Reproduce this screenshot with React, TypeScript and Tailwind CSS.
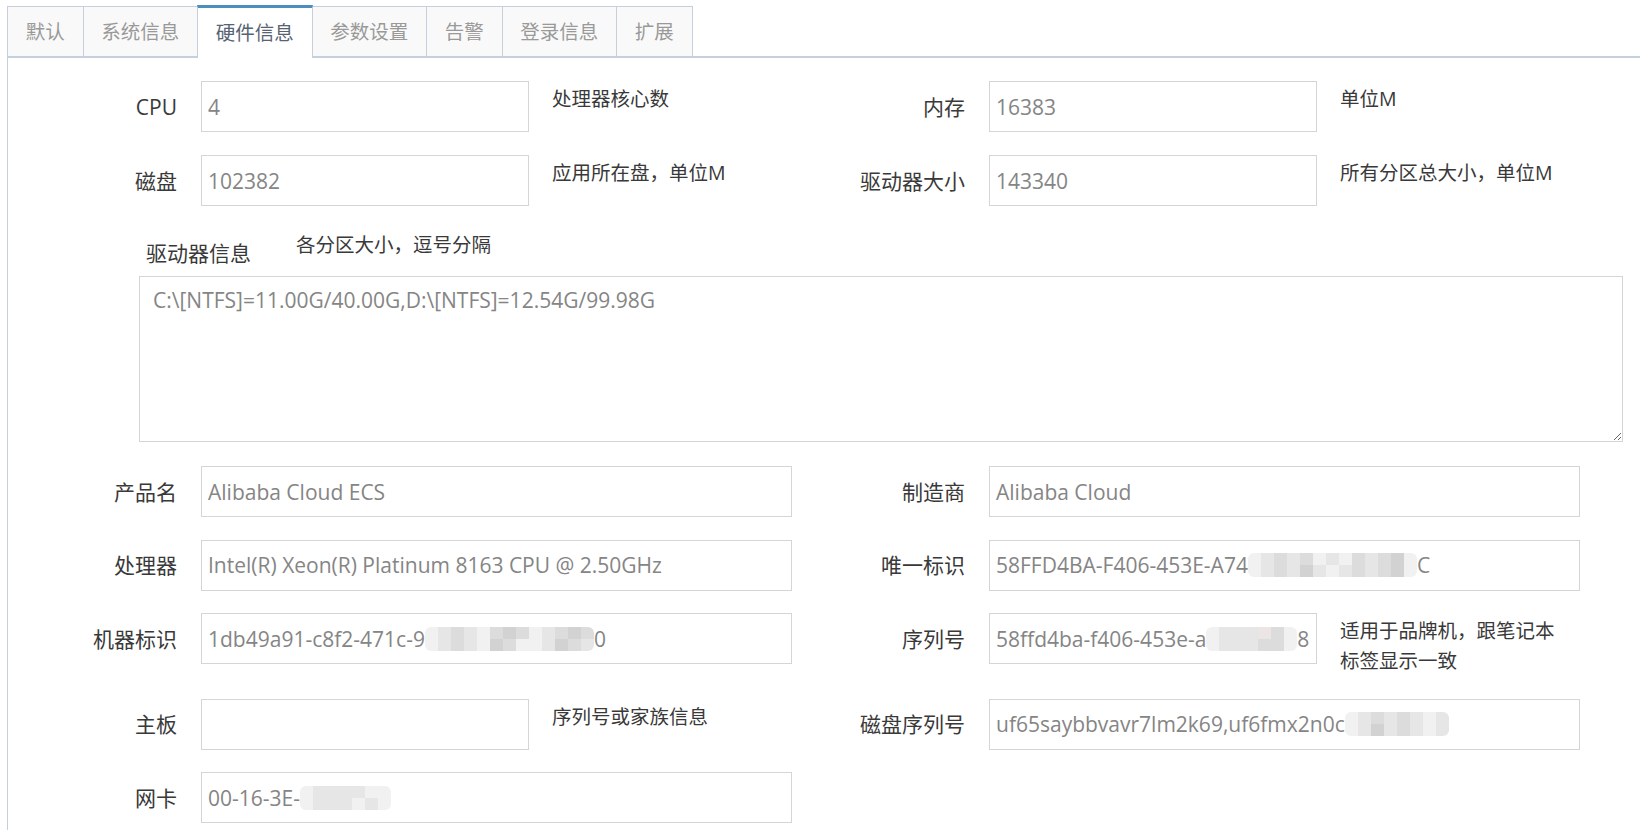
import React from "react";

const tabs = ["默认", "系统信息", "硬件信息", "参数设置", "告警", "登录信息", "扩展"];

const shades: Record<string, string> = {
  a: "bg-[#f1f1f1]",
  b: "bg-[#e6e6e6]",
  c: "bg-[#dcdcdc]",
  d: "bg-[#d2d2d2]",
  e: "bg-[#ebe6e3]",
};

function Mosaic({ top, bottom }: { top: string; bottom: string }) {
  return (
    <span className="inline-flex h-[24px] flex-col overflow-hidden rounded-[6px] align-middle">
      <span className="flex h-[12px]">
        {top.split("").map((s, i) => (
          <span key={i} className={`h-[12px] w-[13px] ${shades[s]}`} />
        ))}
      </span>
      <span className="flex h-[12px]">
        {bottom.split("").map((s, i) => (
          <span key={i} className={`h-[12px] w-[13px] ${shades[s]}`} />
        ))}
      </span>
    </span>
  );
}

function Field({
  label,
  wide,
  hint,
  children,
}: {
  label: string;
  wide?: boolean;
  hint?: React.ReactNode;
  children?: React.ReactNode;
}) {
  return (
    <div className="flex w-[788px] items-start">
      <div className="flex h-[51px] w-[169px] shrink-0 items-center justify-end text-[21px] text-[#393939]">{label}</div>
      <div
        className={`ml-[24px] flex h-[51px] shrink-0 items-center overflow-hidden whitespace-nowrap border border-[#d5d5d5] px-[6px] text-[21px] text-[#858585] ${
          wide ? "w-[591px]" : "w-[328px]"
        }`}
      >
        {children}
      </div>
      {hint && <div className="ml-[23px] pt-[3px] leading-[30px] text-[#393939]">{hint}</div>}
    </div>
  );
}

export default function App() {
  return (
    <div className="h-[830px] w-[1640px] overflow-hidden bg-white font-['Open_Sans','Noto_Sans_CJK_SC',sans-serif] text-[19.5px] leading-[28px]">
      <div className="flex h-[56px] items-end pl-[7px]">
        {tabs.map((t) => {
          const active = t === "硬件信息";
          return (
            <div
              key={t}
              className={
                active
                  ? "relative z-10 -mb-[2px] -mr-px flex h-[53.5px] items-center border border-b-0 border-[#c5d0dc] border-t-[3px] border-t-[#4c8fbd] bg-white px-[17.75px] text-[#576373]"
                  : "-mr-px flex h-[50px] items-center border border-b-0 border-[#c5d0dc] bg-[#f9f9f9] px-[17.75px] text-[#999999]"
              }
            >
              {t}
            </div>
          );
        })}
      </div>

      <div className="ml-[7px] h-[800px] w-[1700px] border-l border-t-2 border-[#c5d0dc] pt-[23px]">
        <div className="flex flex-col gap-[23px]">
          <div className="flex">
            <Field label="CPU" hint="处理器核心数">4</Field>
            <Field label="内存" hint="单位M">16383</Field>
          </div>
          <div className="flex">
            <Field label="磁盘" hint="应用所在盘，单位M">102382</Field>
            <Field label="驱动器大小" hint="所有分区总大小，单位M">143340</Field>
          </div>
        </div>

        <div className="flex h-[70px] items-start">
          <div className="ml-[138px] mt-[33px] text-[21px] text-[#393939]">驱动器信息</div>
          <div className="ml-[45px] mt-[25px] text-[#393939]">各分区大小，逗号分隔</div>
        </div>
        <textarea
          readOnly
          value="C:\[NTFS]=11.00G/40.00G,D:\[NTFS]=12.54G/99.98G"
          className="ml-[131px] block h-[166px] w-[1484px] border border-[#d5d5d5] px-[13px] py-[8px] text-[21px] leading-[30px] text-[#858585] outline-none"
        />

        <div className="mt-[24px] flex flex-col gap-[22.5px]">
          <div className="flex">
            <Field label="产品名" wide>Alibaba Cloud ECS</Field>
            <Field label="制造商" wide>Alibaba Cloud</Field>
          </div>
          <div className="flex">
            <Field label="处理器" wide>Intel(R) Xeon(R) Platinum 8163 CPU @ 2.50GHz</Field>
            <Field label="唯一标识" wide>
              58FFD4BA-F406-453E-A74
              <Mosaic top="abcbcabacbcda" bottom="abcbdbabcbcda" />
              <span>C</span>
            </Field>
          </div>
          <div className="flex">
            <Field label="机器标识" wide>
              1db49a91-c8f2-471c-9
              <Mosaic top="abcbacdcabcdc" bottom="abcbadcaabdcb" />
              <span>0</span>
            </Field>
            <Field
              label="序列号"
              hint={
                <>
                  适用于品牌机，跟笔记本
                  <br />
                  标签显示一致
                </>
              }
            >
              58ffd4ba-f406-453e-a
              <Mosaic top="abbbeca" bottom="abbbcca" />
              <span>8</span>
            </Field>
          </div>
          <div className="flex">
            <Field label="主板" hint="序列号或家族信息" />
            <Field label="磁盘序列号" wide>
              uf65saybbvavr7lm2k69,uf6fmx2n0c
              <Mosaic top="abcbcbab" bottom="abdbcbab" />
            </Field>
          </div>
          <div className="flex">
            <Field label="网卡" wide>
              00-16-3E-
              <Mosaic top="abbbbaa" bottom="abbbaba" />
            </Field>
          </div>
        </div>
      </div>
    </div>
  );
}
